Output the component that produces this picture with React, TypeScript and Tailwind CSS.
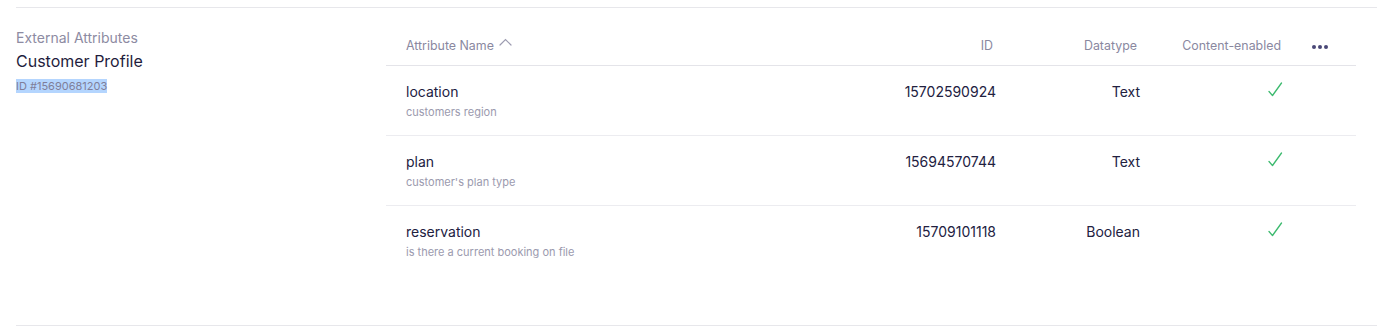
import React from "react";

type Attr = {
  name: string;
  description: string;
  id: string;
  datatype: string;
  contentEnabled: boolean;
};

const ATTRS: Attr[] = [
  { name: "location", description: "customers region", id: "15702590924", datatype: "Text", contentEnabled: true },
  { name: "plan", description: "customer's plan type", id: "15694570744", datatype: "Text", contentEnabled: true },
  { name: "reservation", description: "is there a current booking on file", id: "15709101118", datatype: "Boolean", contentEnabled: true },
];

const COLS = "grid grid-cols-[1fr_150px_144px_143px_73px]";

function CheckIcon() {
  return (
    <svg width="15" height="15" viewBox="0 0 15 15" fill="none">
      <polyline
        points="1,9.5 4.5,13.5 13.5,1"
        stroke="#3dba6f"
        strokeWidth="1.3"
        strokeLinecap="round"
        strokeLinejoin="round"
      />
    </svg>
  );
}

function SortCaret() {
  return (
    <svg width="13" height="8" viewBox="0 0 13 8" fill="none" className="ml-[5px] -translate-y-[4px]">
      <polyline points="1,7 6.5,1.5 12,7" stroke="#9d9cb1" strokeWidth="1.2" strokeLinecap="round" />
    </svg>
  );
}

function Dots() {
  return (
    <div className="flex items-center gap-[2px]">
      <span className="h-[4px] w-[4px] rounded-full bg-[#4a4877]" />
      <span className="h-[4px] w-[4px] rounded-full bg-[#4a4877]" />
      <span className="h-[4px] w-[4px] rounded-full bg-[#4a4877]" />
    </div>
  );
}

export default function App() {
  return (
    <div className="min-h-[327px] bg-white pt-[7px] font-['Inter',sans-serif] antialiased">
      <section className="ml-4 mr-[18px] flex border-y border-[#e7e7eb] pb-[49px] pt-5">
        <div className="w-[370px] shrink-0">
          <div className="text-[14px] leading-5 text-[#8d8ba2]">External Attributes</div>
          <div className="mt-[3px] text-[16px] leading-5 text-[#1f1d3d]">Customer Profile</div>
          <div className="mt-[9px] text-[11px] leading-3">
            <span className="bg-[#b4d5fe] text-[#7f7e99]">ID #15690681203</span>
          </div>
        </div>

        <div className="w-[970px] shrink-0">
          <div className={`${COLS} h-[38px] items-center border-b border-[#e4e4e9] text-[12.4px] text-[#8a889f]`}>
            <div className="flex items-center pl-5">
              Attribute Name
              <SortCaret />
            </div>
            <div className="pr-[3px] text-right">ID</div>
            <div className="pr-[3px] text-right">Datatype</div>
            <div className="pr-[2px] text-right">Content-enabled</div>
            <div className="flex justify-center">
              <Dots />
            </div>
          </div>

          {ATTRS.map((a, i) => (
            <div
              key={a.id}
              className={`${COLS} h-[70px] items-start pt-4 ${i < ATTRS.length - 1 ? "border-b border-[#ececf0]" : ""}`}
            >
              <div className="pl-5">
                <div className="text-[14px] leading-5 text-[#22213f]">{a.name}</div>
                <div className="mt-[2px] text-[11px] leading-4 text-[#9b9aae]">{a.description}</div>
              </div>
              <div className="text-right text-[14px] leading-5 text-[#22213f]">{a.id}</div>
              <div className="text-right text-[14px] leading-5 text-[#22213f]">{a.datatype}</div>
              <div className="flex justify-end">
                {a.contentEnabled ? <CheckIcon /> : null}
              </div>
              <div />
            </div>
          ))}
        </div>
      </section>
    </div>
  );
}
